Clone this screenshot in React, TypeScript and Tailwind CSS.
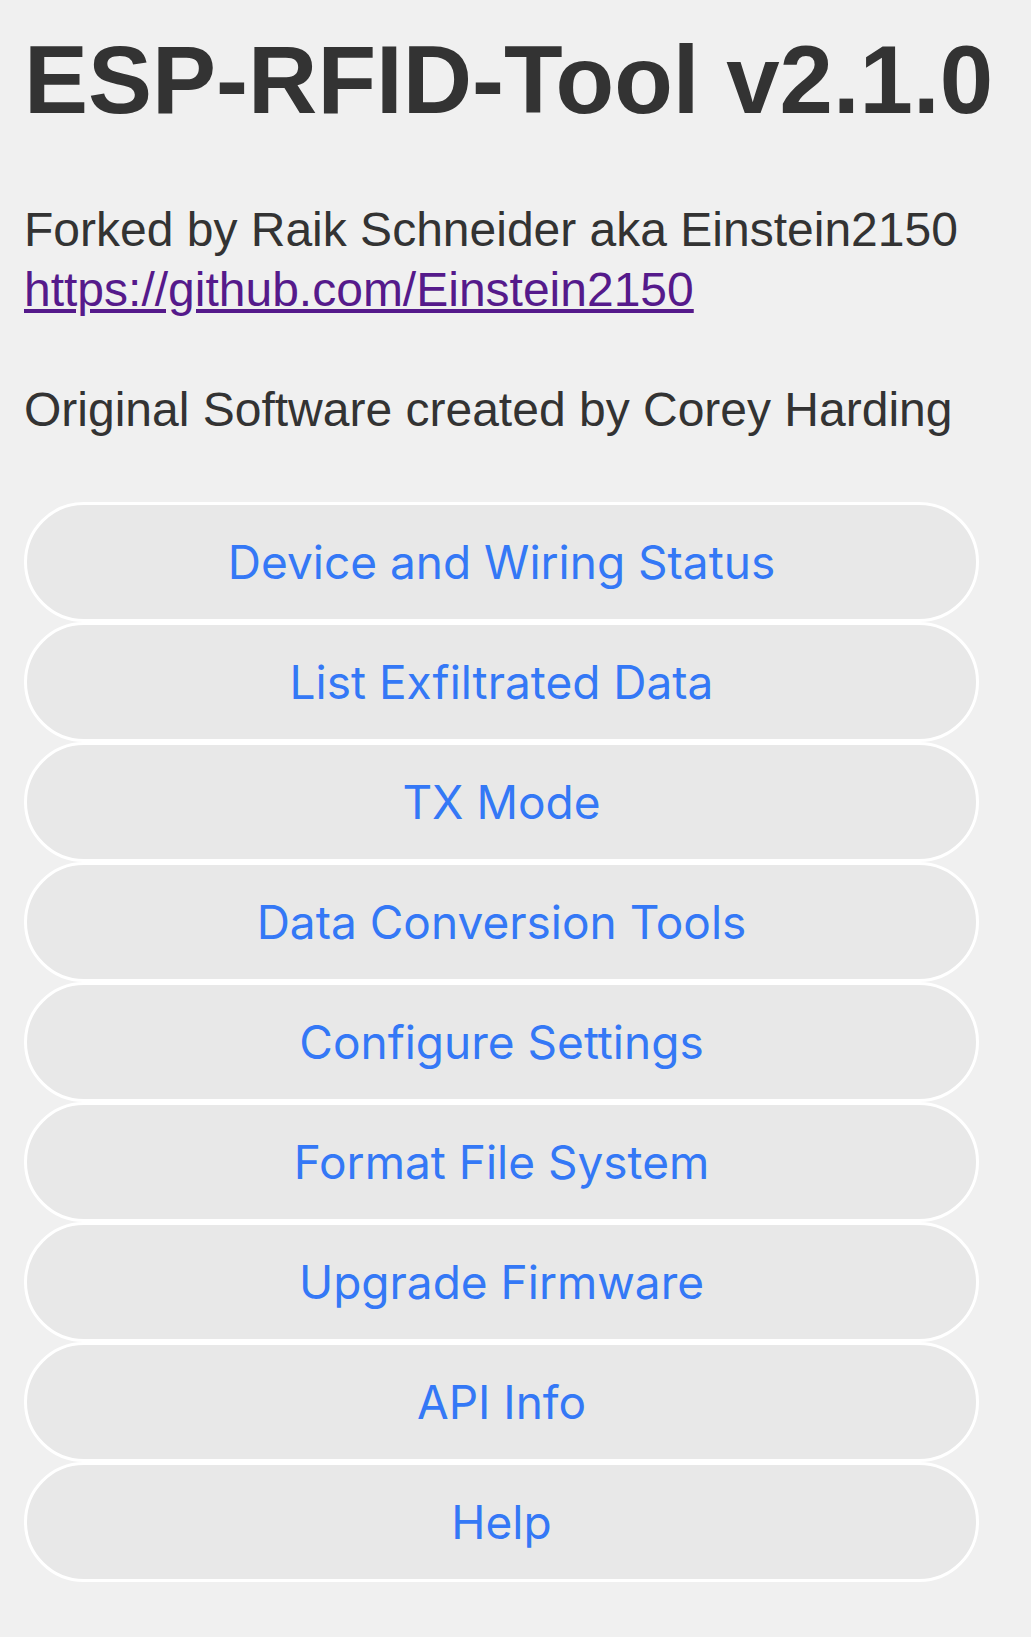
const MENU = [
  'Device and Wiring Status',
  'List Exfiltrated Data',
  'TX Mode',
  'Data Conversion Tools',
  'Configure Settings',
  'Format File System',
  'Upgrade Firmware',
  'API Info',
  'Help',
]

export default function App() {
  return (
    <div className="min-h-[1637px] bg-[#f0f0f0] px-[24px] pt-[32px] pb-[55px] text-[#333] font-['Liberation_Sans',Arial,sans-serif]">
      <h1 className="text-[96px] font-bold leading-none">ESP-RFID-Tool v2.1.0</h1>

      <p className="mt-[72px] text-[48px] leading-[60px]">
        Forked by Raik Schneider aka Einstein2150
        <br />
        <a href="#" className="text-[#551a8b] underline">https://github.com/Einstein2150</a>
      </p>

      <p className="mt-[60px] text-[48px] leading-[60px]">Original Software created by Corey Harding</p>

      {/* Menu buttons */}
      <div className="mt-[62px] flex w-[955px] flex-col">
        {MENU.map(label => (
          <button
            key={label}
            className="flex h-[120px] items-center justify-center rounded-full border-[3px] border-white bg-[#e8e8e8] text-[46px] text-[#3478f6] font-['Inter',sans-serif]"
          >
            {label}
          </button>
        ))}
      </div>
    </div>
  )
}
